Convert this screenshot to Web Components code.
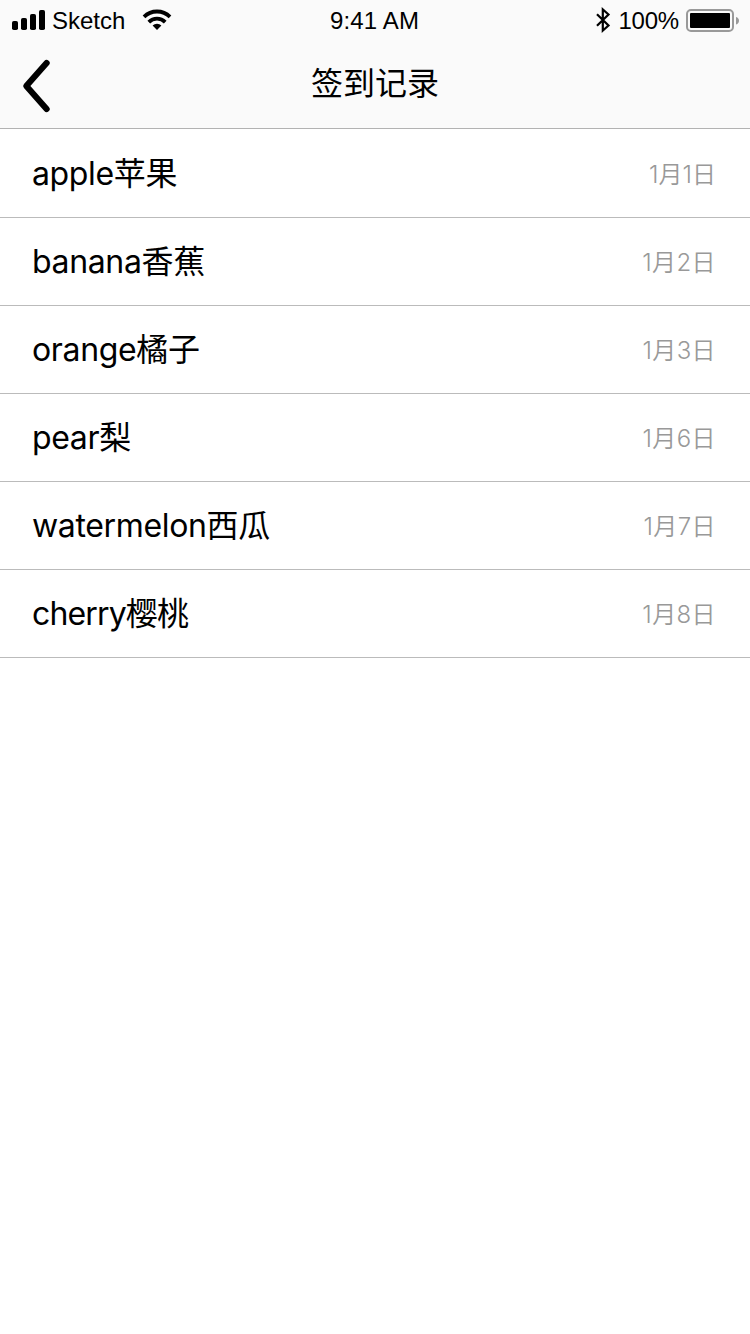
<!DOCTYPE html>
<html lang="zh-CN">
<head>
<meta charset="utf-8">
<title>签到记录</title>
<style>
    body {
        margin: 0;
        background: #fff;
        color: #000;
        font-family: Inter, 'Noto Sans CJK SC', sans-serif;
    }

    record-item {
        --name-spacing: -0.35px;
        --date-spacing: 0.4px;
    }

    record-item:first-child {
        --date-spacing: 0;
    }

    record-item:last-child {
        --name-spacing: -0.85px;
    }
</style>
</head>
<body>
<nav-header>签到记录</nav-header>
<record-list>
    <record-item date="1月1日">apple苹果</record-item>
    <record-item date="1月2日">banana香蕉</record-item>
    <record-item date="1月3日">orange橘子</record-item>
    <record-item date="1月6日">pear梨</record-item>
    <record-item date="1月7日">watermelon西瓜</record-item>
    <record-item date="1月8日">cherry樱桃</record-item>
</record-list>

<script>
//Attaches an open shadow root filled with the given markup
function render(host, html) {
    const template = document.createElement('template');
    template.innerHTML = html;
    host.attachShadow({mode: 'open'}).appendChild(template.content.cloneNode(true));
}

class StatusBar extends HTMLElement {
    constructor() {
        super();
        render(this, `
            <style>
                :host {
                    display: grid;
                    grid-template-columns: 1fr auto 1fr;
                    height: 40px;
                    font: 24px/42px 'Liberation Sans', sans-serif;
                }
                div { display: flex; }
                svg { display: block; flex: none; }
                .carrier { margin-left: 6px; }
                .wifi { margin-left: 17px; }
                .time { margin-right: 1px; letter-spacing: 0.15px; }
                .left { padding-left: 12px; }
                .right { justify-content: flex-end; padding-right: 10px; }
                .level { margin: 0 7px 0 7px; letter-spacing: -0.2px; }
            </style>
            <div class="left">
                <svg width="34" height="40" viewBox="0 0 34 40">
                    <rect x="0" y="21" width="6" height="9" rx="1.8"/>
                    <rect x="9" y="18" width="6" height="12" rx="1.8"/>
                    <rect x="18" y="14" width="6" height="16" rx="1.8"/>
                    <rect x="27" y="10" width="6" height="20" rx="1.8"/>
                </svg>
                <span class="carrier">Sketch</span>
                <svg class="wifi" width="30" height="40" viewBox="0 0 30 40">
                    <g fill="none" stroke="#000" stroke-width="3.8">
                        <path d="M2 16.8a18.6 18.6 0 0 1 26 0"/>
                        <path d="M6.8 22.1a11.6 11.6 0 0 1 16.4 0"/>
                    </g>
                    <path d="M10.6 25.6a6.3 6.3 0 0 1 8.8 0L15 30z"/>
                </svg>
            </div>
            <span class="time">9:41 AM</span>
            <div class="right">
                <svg width="16" height="40" viewBox="0 0 16 40">
                    <path d="M2 14.2l11.500 11.300-5.700 5V9.500l5.700 5L2 25.800" fill="none" stroke="#000" stroke-width="2.2"/>
                </svg>
                <span class="level">100%</span>
                <svg width="54" height="40" viewBox="0 0 54 40">
                    <rect x="1" y="10" width="46" height="21" rx="4" fill="none" stroke="#999" stroke-width="2"/>
                    <rect x="4" y="13" width="40" height="15" rx="1"/>
                    <path d="M50 17c4 1 4 6.5 0 7.5z" fill="#999"/>
                </svg>
            </div>
        `);
    }
}

class NavHeader extends HTMLElement {
    constructor() {
        super();
        render(this, `
            <style>
                :host {
                    display: block;
                    background: #fafafa;
                    border-bottom: 1px solid #b2b2b2;
                }
                .bar {
                    display: grid;
                    grid-template-columns: 1fr auto 1fr;
                    align-items: center;
                    height: 88px;
                }
                svg { display: block; margin-left: 20px; }
                h1 {
                    margin: 0;
                    font-size: 32px;
                    font-weight: 400;
                    line-height: 48px;
                }
            </style>
            <status-bar></status-bar>
            <div class="bar">
                <svg width="32" height="60" viewBox="0 0 32 60">
                    <path d="M26.6 9L6.300 32l20.300 23" fill="none" stroke="#000" stroke-width="6.2" stroke-linecap="round" stroke-linejoin="round"/>
                </svg>
                <h1><slot></slot></h1>
            </div>
        `);
    }
}

class RecordList extends HTMLElement {
    constructor() {
        super();
        render(this, `
            <style>
                :host { display: flex; flex-direction: column; padding-top: 1px; }
            </style>
            <slot></slot>
        `);
    }
}

class RecordItem extends HTMLElement {
    constructor() {
        super();
        render(this, `
            <style>
                :host {
                    display: flex;
                    justify-content: space-between;
                    align-items: center;
                    box-sizing: border-box;
                    height: 88px;
                    padding: 0 34px 0 32px;
                    border-bottom: 1px solid #bbb;
                }
                .name {
                    font-size: 32px;
                    line-height: 48px;
                    letter-spacing: var(--name-spacing);
                }
                .date {
                    padding-top: 2px;
                    font-size: 24px;
                    font-weight: 350;
                    line-height: 36px;
                    letter-spacing: var(--date-spacing);
                    color: #999;
                }
            </style>
            <span class="name"><slot></slot></span>
            <span class="date"></span>
        `);
        this.shadowRoot.querySelector('.date').textContent = this.getAttribute('date');
    }
}

//Here we are defining the custom elements
customElements.define('status-bar', StatusBar);
customElements.define('nav-header', NavHeader);
customElements.define('record-list', RecordList);
customElements.define('record-item', RecordItem);
</script>
</body>
</html>
